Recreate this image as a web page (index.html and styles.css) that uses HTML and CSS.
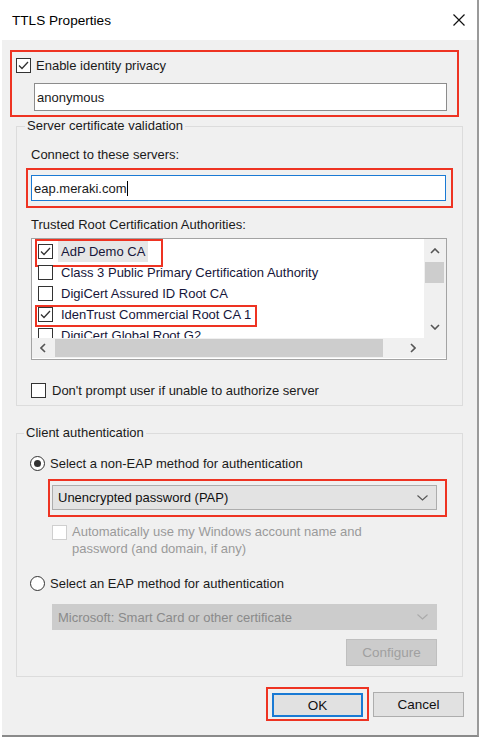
FILE: index.html
```html
<!DOCTYPE html>
<html lang="en">
<head>
  <meta charset="UTF-8" />
  <title>TTLS Properties</title>
  <link rel="stylesheet" href="styles.css">
</head>
<body>

  <div class="window">
    <div class="titlebar">
      <span class="title">TTLS Properties</span>
      <svg class="close" width="12" height="12" viewBox="0 0 12 12"><path d="M0.5 0.5 L11.5 11.5 M11.5 0.5 L0.5 11.5" stroke="#111" stroke-width="1.2" fill="none"/></svg>
    </div>

    <div class="content">
      <!-- identity privacy -->
      <div class="mark privacy">
        <div class="check-row">
          <span class="box"><svg width="13" height="13" viewBox="0 0 13 13"><polyline points="2,6.5 5,9.5 11,3" stroke="#333" stroke-width="1.3" fill="none"/></svg></span>
          <span>Enable identity privacy</span>
        </div>
        <div class="textbox anon">anonymous</div>
      </div>

      <fieldset class="group server">
        <legend>Server certificate validation</legend>
        <div class="label connect">Connect to these servers:</div>
        <div class="mark servers">
          <div class="textbox focused">eap.meraki.com<span class="caret"></span></div>
        </div>
        <div class="label trusted">Trusted Root Certification Authorities:</div>

        <div class="listbox">
          <div class="list-main">
            <div class="list-items">
              <div class="item">
                <span class="hl hl-adp"></span>
                <span class="box"><svg width="13" height="13" viewBox="0 0 13 13"><polyline points="2,6.5 5,9.5 11,3" stroke="#333" stroke-width="1.3" fill="none"/></svg></span>
                <span class="item-text selected">AdP Demo CA</span>
              </div>
              <div class="item">
                <span class="box"></span>
                <span class="item-text">Class 3 Public Primary Certification Authority</span>
              </div>
              <div class="item">
                <span class="box"></span>
                <span class="item-text">DigiCert Assured ID Root CA</span>
              </div>
              <div class="item">
                <span class="hl hl-iden"></span>
                <span class="box"><svg width="13" height="13" viewBox="0 0 13 13"><polyline points="2,6.5 5,9.5 11,3" stroke="#333" stroke-width="1.3" fill="none"/></svg></span>
                <span class="item-text">IdenTrust Commercial Root CA 1</span>
              </div>
              <div class="item">
                <span class="box"></span>
                <span class="item-text">DigiCert Global Root G2</span>
              </div>
            </div>
            <div class="vscroll">
              <div class="arrow-btn up"><svg width="10" height="6" viewBox="0 0 10 6"><polyline points="1,5 5,1 9,5" stroke="#555" stroke-width="1.6" fill="none"/></svg></div>
              <div class="vtrack"><div class="vthumb"></div></div>
              <div class="arrow-btn down"><svg width="10" height="6" viewBox="0 0 10 6"><polyline points="1,1 5,5 9,1" stroke="#555" stroke-width="1.6" fill="none"/></svg></div>
            </div>
          </div>
          <div class="hscroll">
            <div class="harrow"><svg width="6" height="10" viewBox="0 0 6 10"><polyline points="5,1 1,5 5,9" stroke="#555" stroke-width="1.6" fill="none"/></svg></div>
            <div class="htrack"><div class="hthumb"></div></div>
            <div class="harrow"><svg width="6" height="10" viewBox="0 0 6 10"><polyline points="1,1 5,5 1,9" stroke="#555" stroke-width="1.6" fill="none"/></svg></div>
            <div class="corner"></div>
          </div>
        </div>

        <div class="check-row prompt">
          <span class="box"></span>
          <span>Don't prompt user if unable to authorize server</span>
        </div>
      </fieldset>

      <fieldset class="group client">
        <legend>Client authentication</legend>
        <div class="radio-row first">
          <span class="radio on"></span>
          <span>Select a non-EAP method for authentication</span>
        </div>
        <div class="mark method">
          <div class="combo">
            <span>Unencrypted password (PAP)</span>
            <svg width="11" height="6" viewBox="0 0 11 6"><polyline points="0.5,0.5 5.5,5 10.5,0.5" stroke="#555" stroke-width="1.1" fill="none"/></svg>
          </div>
        </div>
        <div class="check-row auto">
          <span class="box disabled"></span>
          <span>Automatically use my Windows account name and<br>password (and domain, if any)</span>
        </div>
        <div class="radio-row second">
          <span class="radio"></span>
          <span>Select an EAP method for authentication</span>
        </div>
        <div class="eap">
          <div class="combo disabled">
            <span>Microsoft: Smart Card or other certificate</span>
            <svg width="11" height="6" viewBox="0 0 11 6"><polyline points="0.5,0.5 5.5,5 10.5,0.5" stroke="#aaa" stroke-width="1.1" fill="none"/></svg>
          </div>
          <div class="btn configure">Configure</div>
        </div>
      </fieldset>

      <div class="footer">
        <div class="mark ok-mark"><div class="btn ok">OK</div></div>
        <div class="btn cancel">Cancel</div>
      </div>
    </div>
  </div>

</body>
</html>
```

FILE: styles.css
```css
* {
  box-sizing: border-box;
}

body {
  margin: 0;
  background: #fff;
  font-family: "Liberation Sans", Arial, sans-serif;
  font-size: 13px;
  color: #1a1a1a;
}

.window {
  width: 477px;
  height: 737px;
  margin-left: 2px;
  border-right: 2px solid #9a9a9a;
  border-bottom: 2px solid #8a8a8a;
  display: flex;
  flex-direction: column;
}

.titlebar {
  height: 40px;
  background: #fff;
  display: flex;
  justify-content: space-between;
  align-items: center;
  padding: 0 12px 0 10px;
}

.title {
  font-size: 13.6px;
  color: #000;
}

.content {
  flex: 1;
  background: #f0f0f0;
  padding-top: 10px;
}

.mark {
  border: 2px solid #ee3322;
}

/* identity privacy */
.privacy {
  margin-left: 8px;
  width: 449px;
  height: 67px;
  padding: 5px 0 0 4px;
}

.check-row {
  display: flex;
  align-items: center;
  gap: 5px;
  height: 16px;
}

.box {
  width: 15px;
  height: 15px;
  border: 1px solid #333;
  background: #fff;
  flex: none;
  display: flex;
  align-items: center;
  justify-content: center;
}

.box.disabled {
  border-color: #cfcfcf;
}

.textbox {
  background: #fff;
  border: 1px solid #8c8c8c;
  display: flex;
  align-items: center;
  padding-left: 2px;
}

.anon {
  margin: 10px 0 0 18px;
  width: 413px;
  height: 28px;
}

/* group boxes */
.group {
  margin: 0 0 0 14px;
  width: 447px;
  border: 1px solid #dcdcdc;
  padding: 0 0 6px 14px;
}

.group legend {
  margin-left: -6px;
  padding: 0 2px;
  line-height: 18px;
}

.label {
  line-height: 18px;
}

.connect {
  margin-top: 11px;
}

.servers {
  margin: 4px 0 0 -5px;
  width: 427px;
  height: 40px;
  padding: 5px 0 0 3px;
}

.focused {
  width: 415px;
  height: 26px;
  border-color: #1a7ad4;
}

.caret {
  width: 1px;
  height: 15px;
  background: #000;
  margin-left: 1px;
}

.trusted {
  margin-top: 8px;
}

/* certificate list */
.listbox {
  margin-top: 4px;
  width: 416px;
  height: 122px;
  border: 1px solid #a3a3a3;
  background: #fff;
}

.list-main {
  display: flex;
  height: 99px;
}

.list-items {
  flex: 1;
  overflow: hidden;
  padding: 2px 0 0 6px;
  color: #16163a;
}

.item {
  position: relative;
  display: flex;
  align-items: center;
  height: 21px;
}

.item .box {
  margin-right: 5px;
}

.item-text {
  padding: 0 3px;
  line-height: 21px;
}

.item-text.selected {
  background: #e6e6e6;
}

.hl {
  position: absolute;
  border: 2px solid #ee3322;
  left: -3px;
}

.hl-adp {
  top: -2px;
  width: 128px;
  height: 28px;
}

.hl-iden {
  top: 1px;
  width: 222px;
  height: 22px;
}

.vscroll {
  width: 22px;
  background: #f0f0f0;
  display: flex;
  flex-direction: column;
}

.arrow-btn {
  height: 23px;
  display: flex;
  align-items: center;
  justify-content: center;
}

.vtrack {
  flex: 1;
  padding: 0 2px 0 1px;
}

.vthumb {
  height: 21px;
  background: #cdcdcd;
}

.hscroll {
  display: flex;
  height: 20px;
  background: #f0f0f0;
}

.harrow {
  width: 22px;
  display: flex;
  align-items: center;
  justify-content: center;
}

.htrack {
  flex: 1;
  padding: 1px 0;
}

.hthumb {
  width: 328px;
  height: 100%;
  margin-left: 1px;
  background: #cdcdcd;
}

.corner {
  width: 22px;
}

.prompt {
  margin-top: 21px;
  height: 18px;
  gap: 6px;
}

/* client authentication */
.client {
  margin-top: 18px;
  padding: 0 0 10px 13px;
}

.radio-row {
  display: flex;
  align-items: center;
  gap: 5px;
  height: 18px;
}

.radio-row.first {
  margin-top: 12px;
}

.radio-row.second {
  margin-top: 17px;
}

.radio {
  width: 15px;
  height: 15px;
  border: 1px solid #333;
  border-radius: 50%;
  background: #fff;
  display: flex;
  align-items: center;
  justify-content: center;
}

.radio.on::after {
  content: "";
  width: 7px;
  height: 7px;
  border-radius: 50%;
  background: #333;
}

.method {
  margin: 7px 0 0 18px;
  width: 399px;
  height: 38px;
  padding: 4px 0 0 2px;
}

.combo {
  width: 385px;
  height: 25px;
  background: #e3e3e3;
  border: 1px solid #adadad;
  display: flex;
  align-items: center;
  justify-content: space-between;
  padding: 0 8px 0 5px;
  color: #111;
}

.auto {
  margin: 6px 0 0 22px;
  height: auto;
  align-items: flex-start;
  color: #9a9a9a;
  line-height: 17px;
}

.auto .box {
  margin-top: 2px;
}

.eap {
  margin-left: 22px;
  width: 385px;
  display: flex;
  flex-direction: column;
  align-items: flex-end;
}

.combo.disabled {
  margin-top: 12px;
  height: 26px;
  background: #cccccc;
  border-color: #cccccc;
  color: #8a8a8a;
}

.btn {
  width: 91px;
  height: 25px;
  background: #e1e1e1;
  border: 1px solid #adadad;
  display: flex;
  align-items: center;
  justify-content: center;
  font-size: 13.5px;
  color: #111;
}

.configure {
  margin-top: 9px;
  height: 27px;
  background: #cccccc;
  border-color: #bfbfbf;
  color: #a0a0a0;
}

/* dialog buttons */
.footer {
  margin-top: 10px;
  display: flex;
  justify-content: flex-end;
  align-items: flex-start;
  padding-right: 13px;
}

.ok-mark {
  width: 103px;
  height: 34px;
  padding: 4px 0 0 4px;
}

.ok {
  height: 24px;
  border: 2px solid #1a7ad4;
}

.cancel {
  margin: 5px 0 0 4px;
}
```
